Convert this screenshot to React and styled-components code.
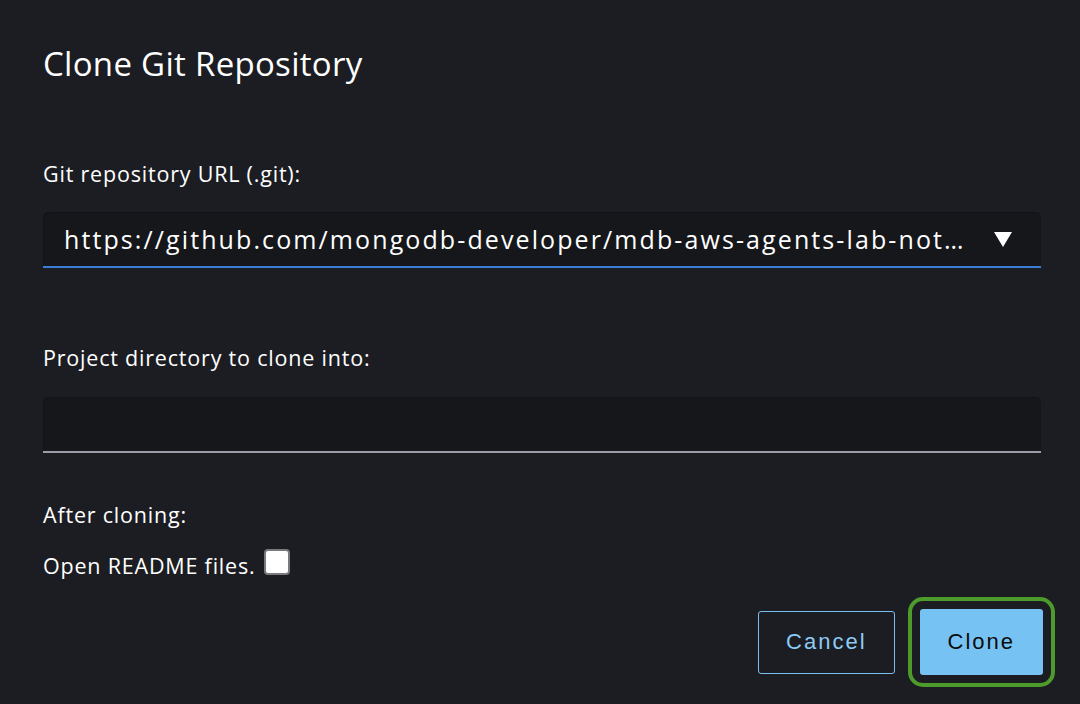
import styled, { createGlobalStyle } from 'styled-components';

const Global = createGlobalStyle`
    html, body {
        margin: 0;
        padding: 0;
        background: #1c1d22;
    }
    body {
        font-family: "Open Sans", "Noto Sans", sans-serif;
        color: #ffffff;
    }
`;

const Dialog = styled.div`
    width: 1080px;
    height: 704px;
    box-sizing: border-box;
    padding: 41px 39px 0 43px;
    background: #1c1d22;
    display: flex;
    flex-direction: column;
`;

const Title = styled.h1`
    margin: 0;
    font-size: 33px;
    font-weight: 400;
    line-height: 46px;
    letter-spacing: 0.3px;
`;

const Label = styled.div`
    font-size: 21.5px;
    line-height: 26px;
    letter-spacing: 0.8px;
    margin-top: ${(p) => p.$top}px;
`;

const Field = styled.div`
    margin-top: ${(p) => p.$top}px;
    width: 998px;
    height: 56px;
    box-sizing: border-box;
    background: #16171b;
    border-radius: 6px 6px 0 0;
    border-bottom: 2px solid ${(p) => p.$line};
    box-shadow: inset 1px 1px 0 #121317;
    display: flex;
    align-items: center;
    padding: 0 29px 0 21px;
`;

const FieldText = styled.span`
    flex: 1;
    font-size: 25px;
    letter-spacing: 2.1px;
    white-space: nowrap;
    overflow: hidden;
    text-overflow: ellipsis;
    margin-right: 24px;
`;

const Caret = styled.span`
    width: 0;
    height: 0;
    border-left: 9.5px solid transparent;
    border-right: 9.5px solid transparent;
    border-top: 15px solid #ffffff;
    margin-top: 1px;
`;

const CheckRow = styled.label`
    margin-top: 25px;
    display: flex;
    align-items: center;
    gap: 9px;
    font-size: 21.5px;
    line-height: 26px;
    letter-spacing: 0.8px;
`;

const Box = styled.span`
    width: 22px;
    height: 22px;
    border: 2px solid #7a7a7e;
    border-radius: 4px;
    background: #ffffff;
    margin-top: -8px;
`;

const Actions = styled.div`
    display: flex;
    justify-content: flex-end;
    align-items: center;
    gap: 13px;
    margin-top: 18px;
    margin-right: -14px;
`;

const Button = styled.button`
    height: ${(p) => (p.$primary ? 66 : 63)}px;
    box-sizing: border-box;
    font-family: "Liberation Sans", Arial, sans-serif;
    font-size: 22px;
    letter-spacing: 2px;
    border-radius: 3px;
    cursor: pointer;
    padding: 0 ${(p) => p.$pad}px;
    ${(p) =>
        p.$primary
            ? `background: #76c3f3; color: #0b0b0b; border: none;`
            : `background: transparent; color: #8ccbf5; border: 1px solid #78c0f0;`}
`;

const Focus = styled.div`
    display: flex;
    padding: 8px 8px;
    border: 4px solid #4c9b2b;
    border-radius: 15px;
`;

export default function App() {
    return (
        <>
            <Global />
            <Dialog>
                <Title>Clone Git Repository</Title>
                <Label $top={74}>Git repository URL (.git):</Label>
                <Field $top={25} $line="#3a7fd5">
                    <FieldText>https://github.com/mongodb-developer/mdb-aws-agents-lab-notebooks.git</FieldText>
                    <Caret />
                </Field>
                <Label $top={77}>Project directory to clone into:</Label>
                <Field $top={26} $line="#9c9aa6" />
                <Label $top={49}>After cloning:</Label>
                <CheckRow>
                    Open README files.
                    <Box />
                </CheckRow>
                <Actions>
                    <Button $pad={27}>Cancel</Button>
                    <Focus>
                        <Button $primary $pad={28}>Clone</Button>
                    </Focus>
                </Actions>
            </Dialog>
        </>
    );
}
